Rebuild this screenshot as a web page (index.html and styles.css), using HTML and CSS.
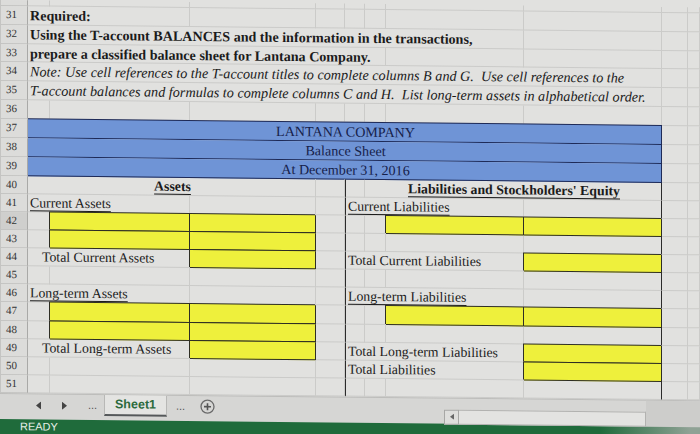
FILE: index.html
```
<!DOCTYPE html>
<html>
<head>
<meta charset="utf-8">
<link rel="stylesheet" href="styles.css">
</head>
<body>
<div class="page">
  <div class="sheet">
    <div class="r p"><div class="h"></div><div class="c"></div><div class="c"></div><div class="c"></div><div class="c"></div><div class="c"></div><div class="c"></div><div class="c"></div><div class="c"></div><div class="c"></div><div class="c"></div></div>

    <div class="r t"><div class="h">31</div><div class="c b sA-B">Required:</div><div class="c"></div><div class="c"></div><div class="c"></div><div class="c"></div><div class="c"></div><div class="c"></div><div class="c"></div><div class="c"></div></div>
    <div class="r t"><div class="h">32</div><div class="c b sA-G"><span>Using the T-account BALANCES </span><span>and the information in the transactions,</span></div><div class="c"></div><div class="c"></div><div class="c"></div></div>
    <div class="r t"><div class="h">33</div><div class="c b sA-F">prepare a classified balance sheet for Lantana Company.</div><div class="c"></div><div class="c"></div><div class="c"></div><div class="c"></div></div>
    <div class="r t"><div class="h">34</div><div class="c it sA-H"><span>Note: Use cell references to the </span><span>T-account titles to complete columns </span><span>B and G.&nbsp; Use cell references to the</span></div><div class="c"></div><div class="c"></div></div>
    <div class="r t"><div class="h">35</div><div class="c it sA-H"><span>T-account balances and formulas to </span><span>complete columns C and H.&nbsp; List </span><span>long-term assets in alphabetical order.</span></div><div class="c"></div><div class="c"></div></div>
    <div class="r t"><div class="h">36</div><div class="c"></div><div class="c"></div><div class="c"></div><div class="c"></div><div class="c"></div><div class="c"></div><div class="c"></div><div class="c"></div><div class="c"></div><div class="c"></div></div>

    <div class="r ban"><div class="h">37</div><div class="c blue first sA-H">LANTANA COMPANY</div><div class="c"></div><div class="c"></div></div>
    <div class="r ban"><div class="h">38</div><div class="c blue sA-H">Balance Sheet</div><div class="c"></div><div class="c"></div></div>
    <div class="r ban"><div class="h">39</div><div class="c blue sA-H">At December 31, 2016</div><div class="c"></div><div class="c"></div></div>

    <div class="r"><div class="h">40</div><div class="c b ctr sA-C"><span class="u">Assets</span></div><div class="c"></div><div class="c bl"></div><div class="c b ctr br sF-H"><span class="u">Liabilities and Stockholders' Equity</span></div><div class="c"></div><div class="c"></div></div>
    <div class="r"><div class="h">41</div><div class="c sA-B"><span class="u">Current Assets</span></div><div class="c"></div><div class="c"></div><div class="c bl sE-G"><span class="u">Current Liabilities</span></div><div class="c br"></div><div class="c"></div><div class="c"></div></div>
    <div class="r"><div class="h sel">42</div><div class="c"></div><div class="c y"></div><div class="c y"></div><div class="c"></div><div class="c bl"></div><div class="c"></div><div class="c y"></div><div class="c y br"></div><div class="c"></div><div class="c"></div></div>
    <div class="r"><div class="h">43</div><div class="c"></div><div class="c y"></div><div class="c y"></div><div class="c"></div><div class="c bl"></div><div class="c"></div><div class="c"></div><div class="c br"></div><div class="c"></div><div class="c"></div></div>
    <div class="r"><div class="h">44</div><div class="c ind sA-B">Total Current Assets</div><div class="c y"></div><div class="c"></div><div class="c bl sE-G">Total Current Liabilities</div><div class="c y br"></div><div class="c"></div><div class="c"></div></div>
    <div class="r"><div class="h">45</div><div class="c"></div><div class="c"></div><div class="c"></div><div class="c"></div><div class="c bl"></div><div class="c"></div><div class="c"></div><div class="c br"></div><div class="c"></div><div class="c"></div></div>
    <div class="r"><div class="h">46</div><div class="c sA-B"><span class="u">Long-term Assets</span></div><div class="c"></div><div class="c"></div><div class="c bl sE-G"><span class="u">Long-term Liabilities</span></div><div class="c br"></div><div class="c"></div><div class="c"></div></div>
    <div class="r"><div class="h">47</div><div class="c"></div><div class="c y"></div><div class="c y"></div><div class="c"></div><div class="c bl"></div><div class="c"></div><div class="c y"></div><div class="c y br"></div><div class="c"></div><div class="c"></div></div>
    <div class="r"><div class="h">48</div><div class="c"></div><div class="c y"></div><div class="c y"></div><div class="c"></div><div class="c bl"></div><div class="c"></div><div class="c"></div><div class="c br"></div><div class="c"></div><div class="c"></div></div>
    <div class="r"><div class="h">49</div><div class="c ind sA-B">Total Long-term Assets</div><div class="c y"></div><div class="c"></div><div class="c bl sE-G">Total Long-term Liabilities</div><div class="c y br"></div><div class="c"></div><div class="c"></div></div>
    <div class="r"><div class="h">50</div><div class="c"></div><div class="c"></div><div class="c"></div><div class="c"></div><div class="c bl sE-G">Total Liabilities</div><div class="c y br"></div><div class="c"></div><div class="c"></div></div>
    <div class="r"><div class="h">51</div><div class="c"></div><div class="c"></div><div class="c"></div><div class="c"></div><div class="c bl"></div><div class="c"></div><div class="c"></div><div class="c br"></div><div class="c"></div><div class="c"></div></div>
  </div>

  <div class="tabs">
    <span class="arr"><svg width="6" height="8" viewBox="0 0 6 8"><path d="M5 0 L0 4 L5 8 Z" fill="#444"/></svg></span>
    <span class="arr"><svg width="6" height="8" viewBox="0 0 6 8"><path d="M1 0 L6 4 L1 8 Z" fill="#444"/></svg></span>
    <span class="dots">...</span>
    <div class="tab">Sheet1</div>
    <span class="dots d2">...</span>
    <span class="plus"><svg width="15" height="15" viewBox="0 0 15 15"><circle cx="7.5" cy="7.5" r="6.5" fill="none" stroke="#6a6a6a" stroke-width="1.3"/><path d="M7.5 4 V11 M4 7.5 H11" stroke="#555" stroke-width="1.6"/></svg></span>
    <div class="scroll">
      <span class="sbtn"><svg width="4" height="6" viewBox="0 0 4 6"><path d="M4 0 L0 3 L4 6 Z" fill="#666"/></svg></span>
      <span class="strack"></span>
    </div>
    <div class="rest"></div>
  </div>

  <div class="status">
    <span class="ready">READY</span>
    <span class="ico i1"></span>
    <span class="ico i2"></span>
  </div>
</div>
</body>
</html>
```
FILE: styles.css
```
* { box-sizing: border-box; margin: 0; padding: 0; }
html, body { width: 700px; height: 434px; overflow: hidden; }
body { background: #e1e1df; font-family: "Liberation Serif", "Times New Roman", serif; color: #1b1b1b; }

.page { width: 700px; transform: skewY(0.6deg); transform-origin: 0 0; }

.sheet { display: flex; flex-direction: column; }

.r {
  display: grid;
  grid-template-columns: 28px 22px 140px 126px 29px 20px 21px 138px 138px 26px 1fr;
  height: 18.1px;
}
.r.p { height: 6px; }
.r.t { height: 18.8px; }
.r.ban { height: 19px; }

.h {
  background: #dcdcda;
  border-right: 1px solid #a9a9a7;
  border-bottom: 1px solid #c4c4c2;
  border-left: 1px solid #c4c4c2;
  font-size: 11px;
  line-height: 17px;
  padding-left: 5px;
  color: #333;
}
.h.sel { background: #cfcfcd; }

.c {
  border-right: 1px solid #cbcbc9;
  border-bottom: 1px solid #cbcbc9;
  font-size: 13.8px;
  line-height: 17px;
  white-space: nowrap;
  padding-left: 2px;
  min-width: 0;
}
.r.t .c { line-height: 16px; padding-top: 1px; font-size: 14.1px; }
.r.t .c.it { font-size: 14.2px; }

.b { font-weight: bold; }
.it { font-style: italic; }
.ctr { text-align: center; }
.ind { padding-left: 14px; }
.u { text-decoration: underline; text-underline-offset: 3px; text-decoration-thickness: 1px; }

.sA-B { grid-column: 2 / 4; }
.sA-C { grid-column: 2 / 5; }
.sA-F { grid-column: 2 / 8; }
.sA-G { grid-column: 2 / 9; }
.sA-H { grid-column: 2 / 10; }
.sE-G { grid-column: 6 / 9; }
.sF-H { grid-column: 7 / 10; }

.blue {
  background: #6f94d6;
  border-bottom: 1px solid #1e2a57;
  border-right: 1px solid #1e2a57;
  color: #16214a;
  text-align: center;
  line-height: 18px;
  font-size: 14.1px;
}
.blue.first { box-shadow: 0 -1px 0 #1e2a57; }

.bl { border-left: 1px solid #2b2b2b; padding-left: 2px; }
.br { border-right: 1px solid #2b2b2b; }

.y {
  background: #eef03c;
  border-right: 1px solid #2e2e24;
  border-bottom: 1px solid #2e2e24;
  box-shadow: -1px -1px 0 #2e2e24;
}

.tabs {
  height: 26px;
  display: flex;
  align-items: flex-start;
  background: #d6d6d4;
  border-top: 1px solid #bdbdbb;
  padding-left: 36px;
  font-family: "Liberation Sans", Arial, sans-serif;
}
.arr { width: 25px; height: 22px; display: flex; align-items: center; }
.dots { font-size: 11px; color: #555; line-height: 20px; width: 16px; margin-left: 2px; }
.tab {
  width: 63px;
  height: 21px;
  background: #e4e4e2;
  border-left: 1px solid #b8b8b6;
  border-right: 1px solid #b8b8b6;
  border-bottom: 2px solid #55585a;
  color: #2c6a3c;
  font-weight: bold;
  font-size: 12.5px;
  line-height: 19px;
  text-align: center;
}
.d2 { margin-left: 9px; width: 22px; }
.plus { height: 22px; display: flex; align-items: center; margin-left: 2px; }
.scroll {
  margin-left: 229px;
  margin-top: 11px;
  width: 202px;
  height: 15px;
  display: flex;
}
.sbtn {
  width: 15px; height: 15px;
  border: 1px solid #a7a7a5;
  background: #dededc;
  display: flex; align-items: center; justify-content: center;
}
.strack { flex: 1; border: 1px solid #b2b2b0; border-left: none; background: #e3e3e1; }
.rest { flex: 1; height: 26px; background: #cdcdcb; }

.status {
  height: 16px;
  background: linear-gradient(to right, #1f6b3b 0, #1f6b3b 600px, #8fa295 690px);
  display: flex;
  align-items: flex-start;
  font-family: "Liberation Sans", Arial, sans-serif;
}
.ready { color: #e6efe8; font-size: 11px; line-height: 15px; padding-left: 20px; width: 470px; }
.ico { width: 13px; height: 4px; margin-top: 12px; background: #b9c8bd; }
.i2 { margin-left: 24px; }
```
